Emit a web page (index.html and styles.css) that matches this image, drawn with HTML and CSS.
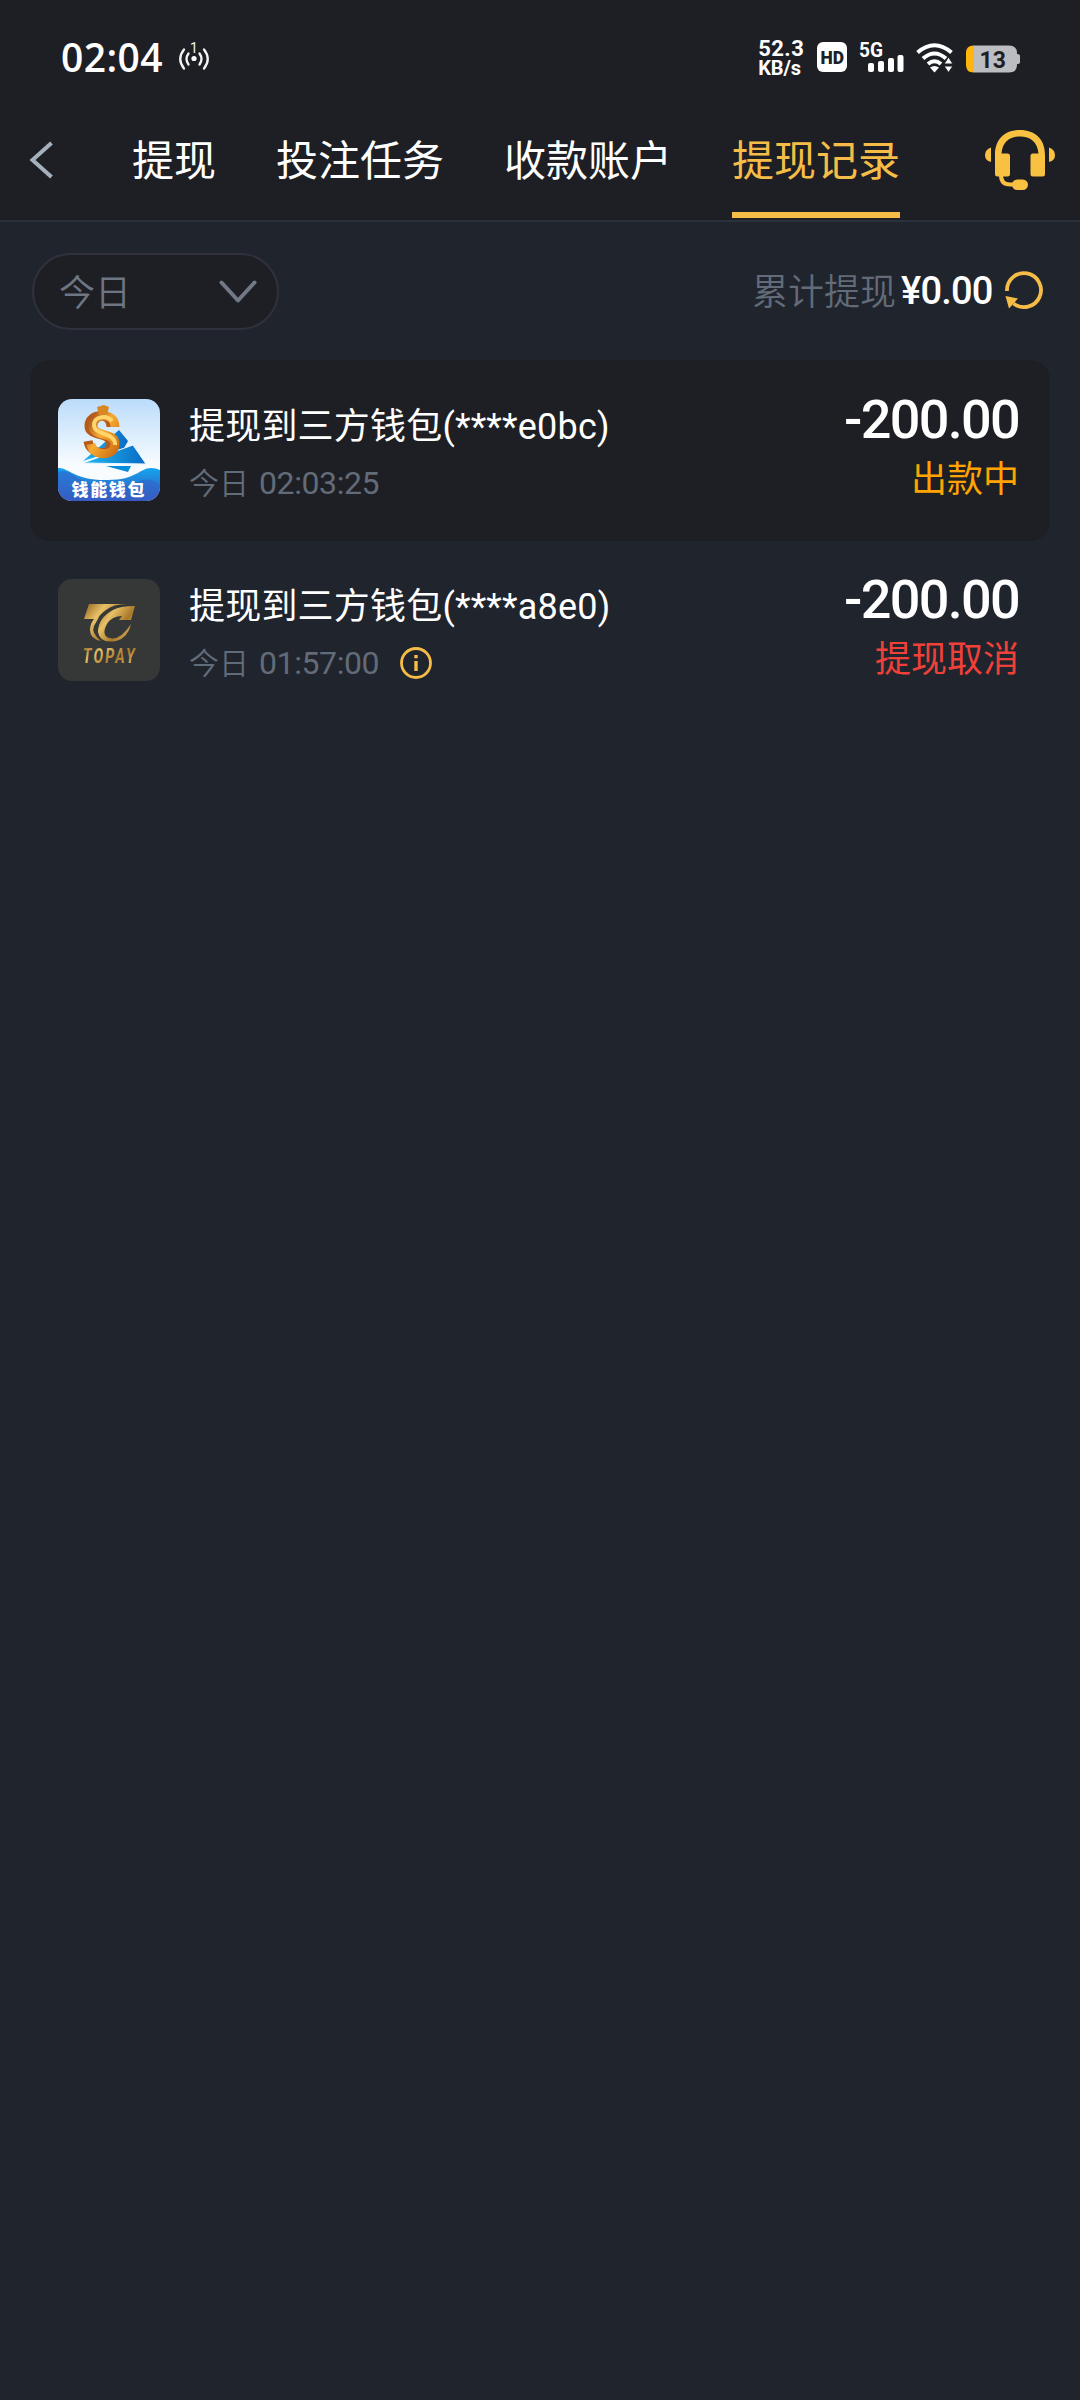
FILE: index.html
```html
<!DOCTYPE html>
<html lang="zh-CN">
<head>
<meta charset="utf-8">
<title>提现记录</title>
<link rel="stylesheet" href="styles.css">
</head>
<body>
<header class="header">
  <div class="status">
    <span class="clock">02:04</span>
    <svg class="hotspot" width="32" height="32" viewBox="0 0 32 32" fill="none" stroke="#f4f4f5" stroke-width="2.3" stroke-linecap="round">
      <path d="M6 8.500Q-1.500 18 6 27.500M10.500 12.500Q6.500 18 10.500 23.500M26 8.500Q33.500 18 26 27.500M21.500 12.500Q25.500 18 21.500 23.500"/>
      <circle cx="16" cy="17.500" r="2.600" fill="#fff" stroke="none"/>
      <text class="hotspot-count" x="12" y="12">1</text>
    </svg>
    <span class="speed"><span>52.3</span><span>KB/s</span></span>
    <svg class="hd" width="30" height="30" viewBox="0 0 30 30">
      <rect width="30" height="30" rx="6" fill="#fff"/>
      <text class="hd-text" x="3.500" y="21.500" textLength="23.500" lengthAdjust="spacingAndGlyphs">HD</text>
    </svg>
    <svg class="signal" width="46" height="32" viewBox="0 0 46 32" fill="#fff">
      <text class="signal-text" x="0" y="15.500" textLength="24" lengthAdjust="spacingAndGlyphs">5G</text>
      <rect x="9" y="22" width="6" height="9" rx="2"/><rect x="19" y="20" width="6" height="11" rx="2"/><rect x="29" y="17" width="6" height="14" rx="2"/><rect x="38.500" y="14" width="6" height="17" rx="2"/>
    </svg>
    <svg class="wifi" width="38" height="30" viewBox="0 0 38 30">
      <g fill="none" stroke="#fff" stroke-width="4"><path d="M1.500 9.500Q18.500 -5 35.500 9.500"/><path d="M7 15.500Q18.500 5.500 30 15.500"/><path d="M12 21Q18.500 15.500 25 21"/></g>
      <path d="M14 24.500Q18.500 21.500 23 24.500L18.500 29.500Z" fill="#fff"/>
      <path d="M28 21l4.500-7 4.500 7ZM28 23h9l-4.500 6.500Z" fill="#fff" stroke="#1e1f24" stroke-width="1"/>
    </svg>
    <svg class="battery" width="54" height="28" viewBox="0 0 54 28">
      <path d="M8 .5H43Q51 .5 51 8V9Q54 9 54 11V17Q54 19 51 19V20Q51 27.500 43 27.500H8Z" fill="#bcbdc1"/>
      <path d="M7.500 .5H8V27.500H7.500Q0 27.500 0 20V8Q0 .5 7.500 .5Z" fill="#ffb50d"/>
      <text class="battery-text" x="13.500" y="22.500">13</text>
    </svg>
  </div>
  <nav class="tabs">
    <svg class="back" width="24" height="38" viewBox="0 0 24 38" fill="none" stroke="#a6b0bd" stroke-width="4"><path d="M21.500 2L2.500 19 21.500 36"/></svg>
    <div class="tab-list">
      <a class="tab">提现</a>
      <a class="tab">投注任务</a>
      <a class="tab">收款账户</a>
      <a class="tab active">提现记录</a>
    </div>
    <svg class="service" width="70" height="60" viewBox="0 0 70 60" fill="#f9c142">
      <path d="M6 17.500V32Q0 30.500 0 25T6 17.500ZM64 17.500V32Q70 30.500 70 25T64 17.500Z"/>
      <path d="M10 25C10 9 20 0 35 0S60 9 60 25V44Q60 46.500 57.500 46.500H48Q45.500 46.500 45.500 44V26Q45.500 23.500 48 23.500H53.500C52.500 12 45.500 6.500 35 6.500S17.500 12 16.500 23.500H22.500Q25 23.500 25 26V44Q25 46.500 22.500 46.500H12.500Q10 46.500 10 44Z"/>
      <path d="M16 45Q16 54.500 25 54.500H31" fill="none" stroke="#f9c142" stroke-width="4"/>
      <rect x="27" y="49.500" width="16" height="10.500" rx="5.200"/>
    </svg>
  </nav>
</header>
<main>
  <div class="toolbar">
    <div class="filter"><span class="filter-label">今日</span>
      <svg width="38" height="24" viewBox="0 0 38 24" fill="none" stroke="#707985" stroke-width="4" stroke-linecap="round" stroke-linejoin="round"><path d="M2.500 2.500L19 20.500 35.500 2.500"/></svg>
    </div>
    <div class="total"><span class="total-label">累计提现</span><span class="total-value">¥0.00</span>
      <svg class="refresh" width="38" height="38" viewBox="0 0 38 38"><path d="M2 20A17 17 0 1 1 8.500 32.500" fill="none" stroke="#f5bd47" stroke-width="3.800"/><path d="M.5 25L13 27.500 4 37.500Z" fill="#f5bd47"/></svg>
    </div>
  </div>
  <section class="record shaded">
    <svg class="logo" width="102" height="102" viewBox="0 0 102 102">
      <defs>
        <linearGradient id="sky" x2="0" y2="1"><stop stop-color="#bbdcfb"/><stop offset=".65" stop-color="#f8fcff"/></linearGradient>
        <linearGradient id="sea" x2="0" y2="1"><stop stop-color="#12a5ee"/><stop offset="1" stop-color="#3e50b8"/></linearGradient>
        <linearGradient id="coin" x2="1" y2="1"><stop stop-color="#ad541d"/><stop offset=".45" stop-color="#f6ac32"/><stop offset="1" stop-color="#cf7015"/></linearGradient>
        <linearGradient id="plane" x2="1"><stop stop-color="#21b9ef"/><stop offset="1" stop-color="#096ac5"/></linearGradient>
        <clipPath id="tile"><rect width="102" height="102" rx="14"/></clipPath>
      </defs>
      <g clip-path="url(#tile)">
        <rect width="102" height="102" fill="url(#sky)"/>
        <path d="M25 62L61 31 70 42 66 49Z" fill="url(#plane)"/>
        <path d="M25 64L75 46 88 65Z" fill="url(#plane)" stroke="#e7f5ff" stroke-width="1"/>
        <path d="M48 67L73 67 70 73Z" fill="#078bdc"/>
        <g fill="none" stroke-linecap="butt">
          <path d="M53 28C53 13 32 14 31 26C30 39 53 32 53 45C53 58 32 56 30 42" stroke="#b65a1c" stroke-width="9"/>
          <path d="M57 28C57 13 36 14 35 26C34 39 57 32 57 45C57 58 35 58 33 45" stroke="url(#coin)" stroke-width="9"/>
          <path d="M54 22C48 15 36 18 36 26C36 37 58 33 57 46" stroke="#ffd56c" stroke-width="4"/>
        </g>
        <path d="M39 8L46 6 51 8 49 16 41 16Z" fill="#d98722"/>
        <path d="M0 69C10 68 17 82 50 81C78 81 82 69 93 69Q98 69 102 71V102H0Z" fill="url(#sea)"/>
        <path d="M0 73Q9 69 21 80Q50 93 80 83Q91 77 102 86V102H0Z" fill="#3264c9" opacity=".6"/>
        <text class="logo-cn" x="13.500" y="96.500" textLength="73" lengthAdjust="spacing">钱能钱包</text>
      </g>
    </svg>
    <div class="info"><div class="title">提现到三方钱包(****e0bc)</div><div class="date"><span class="day">今日</span><span class="time">02:03:25</span></div></div>
    <div class="result"><div class="amount">-200.00</div><div class="state pending">出款中</div></div>
  </section>
  <section class="record">
    <svg class="logo" width="102" height="102" viewBox="0 0 102 102">
      <defs><linearGradient id="gold" x2="1" y2=".7"><stop stop-color="#8d601c"/><stop offset=".35" stop-color="#e8c067"/><stop offset=".7" stop-color="#a87828"/><stop offset="1" stop-color="#d9b060"/></linearGradient></defs>
      <rect width="102" height="102" rx="14" fill="#363838"/>
      <path d="M31 25H69Q55 25 48 31Q41 36 40 40L36 47Q33 54 43 62Q32 60 32 51Q32 45 36 40H26Z" fill="url(#gold)"/>
      <path d="M77 27L73 41H61L64 37Q54 37 49 45Q43 56 51 59Q62 62 73 45Q70 59 58 62Q42 65 40 53Q40 39 55 31Q62 27 77 27Z" fill="url(#gold)"/>
      <text class="logo-en" transform="scale(.72 1)" x="34.500" y="84" textLength="72" lengthAdjust="spacing" fill="url(#gold)">TOPAY</text>
    </svg>
    <div class="info"><div class="title">提现到三方钱包(****a8e0)</div><div class="date"><span class="day">今日</span><span class="time">01:57:00</span>
      <svg class="tip" width="32" height="32" viewBox="0 0 32 32"><circle cx="16" cy="16" r="14.500" fill="none" stroke="#f5bd47" stroke-width="2.800"/><path d="M14.300 8h3.400v3.300h-3.400zM14.300 14h3.400v10h-3.400z" fill="#f5bd47"/></svg></div></div>
    <div class="result"><div class="amount">-200.00</div><div class="state cancelled">提现取消</div></div>
  </section>
</main>
</body>
</html>
```
FILE: styles.css
```css
* { box-sizing: border-box; }
body { margin: 0; min-height: 2400px; background: #20242d; color: #fff; font-family: Roboto, "Noto Sans CJK SC", sans-serif; }
svg { display: block; flex: none; overflow: visible; }
.header { height: 222px; background: #1e1f24; border-bottom: 2px solid #2c303a; }
.status { height: 100px; padding: 41px 60px 0 61px; display: flex; align-items: flex-start; }
.clock { width: 118px; font: 600 39px/32px "Open Sans", sans-serif; letter-spacing: .4px; }
.hotspot-count { font: 14px Roboto, sans-serif; fill: #f4f4f5; stroke: none; }
.speed { display: flex; flex-direction: column; width: 59px; margin: -2px 0 0 548px; font: 700 22px/20px Roboto, sans-serif; letter-spacing: .4px; }
.speed span + span { font-size: 20px; line-height: 18px; letter-spacing: -.2px; }
.hd { margin: 1px 0 0 0; }
.hd-text { font: 900 19px Roboto, sans-serif; fill: #1e1f24; }
.signal { margin: 0 0 0 12px; }
.signal-text { font: 700 20px Roboto, sans-serif; }
.wifi { margin: 2px 0 0 11px; }
.battery { margin: 4px 0 0 12px; }
.battery-text { font: 700 23px Roboto, sans-serif; fill: #1e1f24; }
.tabs { height: 120px; padding: 0 25px 0 30px; display: flex; }
.back { margin: 41px 78px 0 0; }
.tab-list { display: flex; gap: 60px; flex: 1; }
.tab { height: 118px; font-size: 42px; line-height: 123px; white-space: nowrap; border-bottom: 6px solid transparent; }
.tab.active { color: #f5bd47; border-color: #f5bd47; }
.service { margin-top: 30px; }
.toolbar { height: 138px; padding: 31px 37px 0 32px; display: flex; justify-content: space-between; font-size: 36px; }
.filter { width: 247px; height: 77px; padding: 0 20px 0 25px; border: 2px solid #2f323c; border-radius: 39px; background: #1e1f24; color: #6d7682; display: flex; align-items: center; justify-content: space-between; }
.filter-label, .total-label { padding-bottom: 4px; font-weight: 350; }
.total { height: 75px; display: flex; align-items: center; }
.total-label { color: #626b78; }
.total-value { width: 94px; margin: 1px 10px 0 5px; font-size: 38px; font-weight: 500; letter-spacing: -.8px; }
.refresh { margin-bottom: 2px; }
.record { height: 180px; margin: 0 30px; padding: 39px 31px 0 28px; display: flex; }
.shaded { height: 181px; background: #1e1f24; border-radius: 20px; }
.record + .record { padding-top: 38px; }
.info { margin-left: 29px; flex: 1; }
.title { margin-top: 1px; font-size: 36px; line-height: 54px; letter-spacing: .2px; }
.date { display: flex; align-items: center; height: 58px; color: #626b78; font-size: 30px; }
.day { padding-bottom: 4px; font-weight: 350; }
.time { margin: -1px 0 0 10px; font-size: 32px; letter-spacing: -.4px; }
.tip { margin: -1px 0 0 21px; }
.result { text-align: right; }
.amount { margin-top: -9px; font-size: 54px; font-weight: 500; line-height: 60px; letter-spacing: -1.7px; }
.state { padding-top: 3px; font-size: 36px; line-height: 54px; }
.pending { color: #ffa300; }
.cancelled { color: #ef4039; }
.logo-cn { font: 900 17px "Noto Sans CJK SC", sans-serif; fill: #fff; }
.logo-en { font: italic 700 20px Roboto, sans-serif; }
```
